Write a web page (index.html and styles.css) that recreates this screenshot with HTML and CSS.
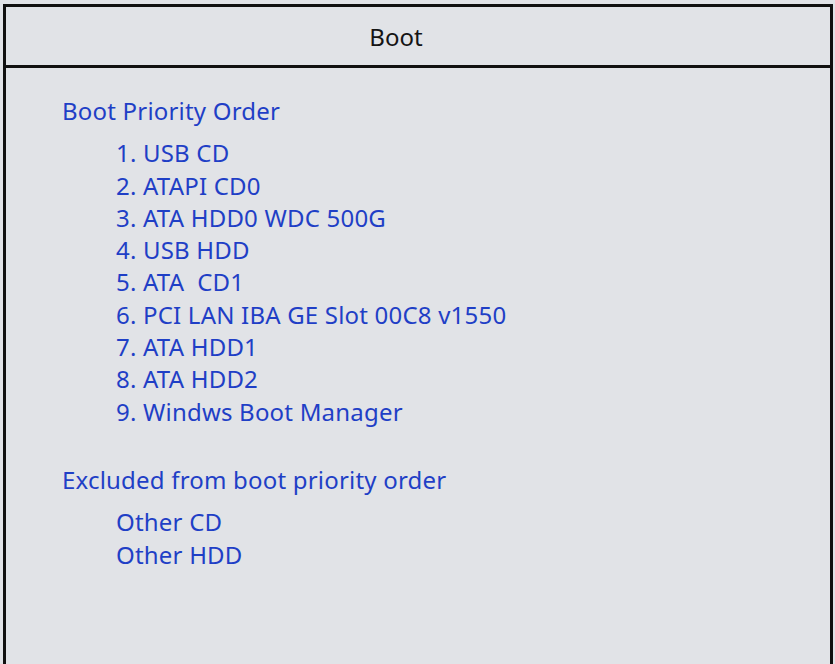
FILE: index.html
```html
<!DOCTYPE html>
<html lang="en">
<head>
  <meta charset="UTF-8">
  <meta name="viewport" content="width=device-width, initial-scale=1.0">
  <title>Boot</title>
  <link rel="stylesheet" href="styles.css">
</head>
<body>
  <div class="panel">
    <div class="header">Boot</div>
    <div class="content">
      <div class="section-title">Boot Priority Order</div>
      <ul class="boot-list">
        <li>1. USB CD</li>
        <li>2. ATAPI CD0</li>
        <li>3. ATA HDD0 WDC 500G</li>
        <li>4. USB HDD</li>
        <li>5. ATA&nbsp; CD1</li>
        <li>6. PCI LAN IBA GE Slot 00C8 v1550</li>
        <li>7. ATA HDD1</li>
        <li>8. ATA HDD2</li>
        <li>9. Windws Boot Manager</li>
      </ul>
      <div class="section-title excluded">Excluded from boot priority order</div>
      <ul class="boot-list">
        <li>Other CD</li>
        <li>Other HDD</li>
      </ul>
    </div>
  </div>
</body>
</html>
```

FILE: styles.css
```css
html, body {
  margin: 0;
  height: 100%;
  background: #e1e3e7;
  font-family: "Noto Sans", "Open Sans", sans-serif;
}
.panel {
  margin: 4px 2px 0 3px;
  min-height: 660px;
  border: 3px solid #111;
  border-bottom: none;
  box-sizing: border-box;
}
.header {
  height: 58px;
  padding-right: 44px;
  border-bottom: 3px solid #111;
  display: flex;
  align-items: center;
  justify-content: center;
  font-size: 24px;
  color: #141414;
}
.content {
  padding: 27px 0 0 56px;
  color: #1f3fc6;
  font-size: 24px;
  line-height: 32.3px;
  letter-spacing: 0.2px;
}
.section-title.excluded {
  margin-top: 36px;
}
.boot-list {
  list-style: none;
  margin: 10px 0 0;
  padding: 0 0 0 54px;
}
```
